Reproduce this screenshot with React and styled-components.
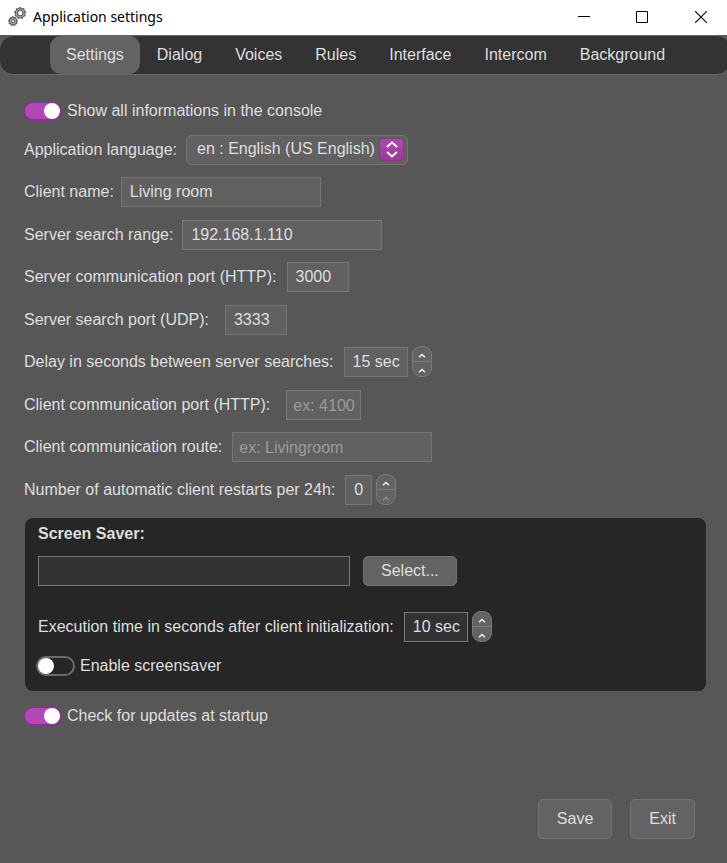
import React, { useState } from "react";
import styled, { createGlobalStyle, css } from "styled-components";

const GlobalStyle = createGlobalStyle`
  *, *::before, *::after { box-sizing: border-box; }
  body {
    margin: 0;
    background: #575757;
    color: #dfdfdf;
    font: 16px/20px "Liberation Sans", Arial, sans-serif;
  }
  button, input, select { font: inherit; color: inherit; margin: 0; }
`;

const Window = styled.div`
  min-height: 100vh;
  display: flex;
  flex-direction: column;
  overflow-x: hidden;
`;

const TitleBar = styled.header`
  height: 35px;
  display: flex;
  align-items: center;
  padding: 0 0 2px 8px;
  background: #fff;
  color: #000;
`;

const Title = styled.h1`
  margin: 0 auto 0 6px;
  font: 14px/20px "Noto Sans", sans-serif;
`;

const WindowButton = styled.button`
  width: 58px;
  height: 32px;
  display: grid;
  place-items: center;
  padding: 0;
  border: 0;
  background: transparent;
  &:last-child { width: 56px; padding-left: 4px; }
`;

const TabBar = styled.nav`
  display: flex;
  gap: 1px;
  height: 40px;
  margin: 0 -4px 0 -1px;
  padding-left: 50px;
  border: 1px solid #686868;
  border-radius: 14px;
  background: #333;
`;

const Tab = styled.button`
  padding: 0 16px;
  border: 0;
  border-radius: 11px;
  background: ${(p) => (p.$active ? "#636363" : "transparent")};
`;

const Content = styled.main`
  flex: 1;
  display: flex;
  flex-direction: column;
  padding: 26px 21px 24px 24px;
`;

const ToggleLabel = styled.label`
  display: flex;
  align-items: center;
  gap: 5px;
  height: 20px;
  margin-left: -1px;
`;

const Switch = styled.input`
  appearance: none;
  display: flex;
  align-items: center;
  width: 39px;
  height: 20px;
  border-radius: 10px;
  border: 2px solid #6c6c6c;
  background: #262626;
  &::before {
    content: "";
    width: 16px;
    height: 16px;
    border-radius: 50%;
    background: #fff;
  }
  &:checked {
    justify-content: flex-end;
    border-color: #87358a;
    background: #b148b3;
  }
`;

const Rows = styled.div`
  display: flex;
  flex-direction: column;
  margin-top: 14px;
`;

const Row = styled.div`
  display: flex;
  align-items: center;
  height: 30px;
  & + & { margin-top: 12px; }
  & + &:nth-child(odd) { margin-top: 13px; }
`;

const labelGaps = { small: 7, medium: 9, normal: 10, wide: 16 };

const Label = styled.label`
  margin-right: ${(p) => labelGaps[p.$gap || "normal"]}px;
  white-space: nowrap;
`;

const fieldWidths = { count: 27, port: 62, seconds: 64, example: 75, text: 200, file: 312 };

const Field = styled.input`
  width: ${(p) => fieldWidths[p.$size]}px;
  height: 30px;
  padding: 0 2px 0 8px;
  border: 1px solid ${(p) => (p.$dark ? "#797979" : "#757575")};
  border-radius: 0;
  background: ${(p) => (p.$dark ? "#323232" : "#616161")};
  outline: 0;
  ${(p) => p.$hint && css`padding: 1px 2px 0 6px;`}
  &::placeholder { color: #9b9b9b; opacity: 1; }
`;

const SelectBox = styled.div`
  position: relative;
  display: flex;
`;

const Select = styled.select`
  appearance: none;
  height: 30px;
  width: 222px;
  padding: 0 30px 2px 10px;
  border: 1px solid #727272;
  border-radius: 5px;
  background: #616161;
`;

const SelectArrow = styled.span`
  position: absolute;
  top: 3px;
  right: 4px;
  width: 25px;
  height: 23px;
  display: grid;
  place-items: center;
  border: 1px solid #87358a;
  border-radius: 4px;
  background: linear-gradient(#af49b1, #963d99);
  pointer-events: none;
`;

const Stepper = styled.div`
  display: flex;
  flex-direction: column;
  width: 20px;
  height: 31px;
  margin: 0 0 2px 4px;
  border: 1px solid #7b7b7b;
  border-radius: 9px;
  background: #636363;
  overflow: hidden;
`;

const StepButton = styled.button`
  flex: 1;
  display: grid;
  place-items: center;
  padding: 3px 0 0;
  border: 0;
  background: transparent;
  color: #f2f2f2;
  & + & { border-top: 1px solid #7b7b7b; }
  &:disabled { color: #8c8c8c; }
`;

const Panel = styled.section`
  display: flex;
  flex-direction: column;
  margin: 13px 0 15px 1px;
  padding: 6px 13px 15px;
  border-radius: 8px;
  background: #262626;
`;

const PanelTitle = styled.h2`
  margin: 0;
  font-size: 16px;
  line-height: 20px;
`;

const PanelRow = styled.div`
  display: flex;
  align-items: center;
  height: 30px;
  margin-top: ${(p) => (p.$spaced ? 26 : 12)}px;
`;

const PanelToggle = styled.div`
  margin: 14px 0 0 -1px;
`;

const Button = styled.button`
  height: ${(p) => (p.$large ? 40 : 30)}px;
  padding: 0 ${(p) => (p.$large ? 18 : 17)}px;
  border: 1px solid #737373;
  border-radius: 5px;
  background: #636363;
`;

const SelectFile = styled(Button)`
  margin-left: 13px;
`;

const Footer = styled.footer`
  display: flex;
  justify-content: flex-end;
  gap: 18px;
  margin-top: auto;
  padding-right: 11px;
`;

function Gear({ x, y, r }) {
  const teeth = Array.from({ length: 9 }, (_, i) => i * 40);
  return (
    <g transform={`translate(${x} ${y})`}>
      {teeth.map((angle) => (
        <path key={angle} d={`M0 ${-r}V${-r - 2.3}`} transform={`rotate(${angle})`} stroke="#777" strokeWidth="1.8" />
      ))}
      <circle r={r} fill="none" stroke="#5a5a5a" strokeWidth="3.2" />
      <circle r={r} fill="none" stroke="#a8a8a8" strokeWidth="1.3" />
    </g>
  );
}

function GearsIcon() {
  return (
    <svg width="19" height="21" viewBox="0 0 19 21" aria-hidden="true">
      <Gear x={12.2} y={7} r={3.8} />
      <Gear x={5} y={15.2} r={2.6} />
    </svg>
  );
}

function Chevron() {
  return (
    <svg width="8" height="5" viewBox="0 0 8 5" aria-hidden="true">
      <path d="M1 4.2L4 1.5L7 4.2" fill="none" stroke="currentColor" strokeWidth="1.5" />
    </svg>
  );
}

function Toggle({ label, on }) {
  return (
    <ToggleLabel>
      <Switch type="checkbox" role="switch" defaultChecked={on} />
      {label}
    </ToggleLabel>
  );
}

function NumberField({ id, start, unit = "", size, dark }) {
  const [value, setValue] = useState(start);
  return (
    <>
      <Field id={id} $size={size} $dark={dark} value={`${value}${unit}`} readOnly />
      <Stepper>
        <StepButton type="button" aria-label="Increase" onClick={() => setValue(value + 1)}>
          <Chevron />
        </StepButton>
        <StepButton type="button" aria-label="Decrease" disabled={value === 0} onClick={() => setValue(value - 1)}>
          <Chevron />
        </StepButton>
      </Stepper>
    </>
  );
}

function TextRow({ id, label, gap, size, ...input }) {
  return (
    <Row>
      <Label htmlFor={id} $gap={gap}>{label}</Label>
      <Field id={id} $size={size} $hint={Boolean(input.placeholder)} {...input} />
    </Row>
  );
}

const tabs = ["Settings", "Dialog", "Voices", "Rules", "Interface", "Intercom", "Background"];

export default function App() {
  const [active, setActive] = useState("Settings");
  return (
    <Window>
      <GlobalStyle />
      <TitleBar>
        <GearsIcon />
        <Title>Application settings</Title>
        <WindowButton aria-label="Minimize">
          <svg width="12" height="12"><path d="M0 5.5H12" stroke="#000" /></svg>
        </WindowButton>
        <WindowButton aria-label="Maximize">
          <svg width="12" height="12"><path d="M.5 .5H11.5V11.5H.5Z" fill="none" stroke="#000" /></svg>
        </WindowButton>
        <WindowButton aria-label="Close">
          <svg width="12" height="12"><path d="M0 0L12 12M12 0L0 12" stroke="#000" strokeWidth="1.1" /></svg>
        </WindowButton>
      </TitleBar>
      <TabBar>
        {tabs.map((tab) => (
          <Tab key={tab} $active={tab === active} onClick={() => setActive(tab)}>{tab}</Tab>
        ))}
      </TabBar>
      <Content>
        <Toggle label="Show all informations in the console" on />
        <Rows>
          <Row>
            <Label htmlFor="language" $gap="medium">Application language:</Label>
            <SelectBox>
              <Select id="language">
                <option>en : English (US English)</option>
              </Select>
              <SelectArrow>
                <svg width="12" height="17" viewBox="0 0 12 17" aria-hidden="true">
                  <path d="M1 6L6 1.5L11 6M1 11L6 15.5L11 11" fill="none" stroke="#fff" strokeWidth="1.7" />
                </svg>
              </SelectArrow>
            </SelectBox>
          </Row>
          <TextRow id="name" label="Client name:" gap="small" size="text" defaultValue="Living room" />
          <TextRow id="range" label="Server search range:" gap="medium" size="text" defaultValue="192.168.1.110" />
          <TextRow id="http" label="Server communication port (HTTP):" size="port" defaultValue="3000" />
          <TextRow id="udp" label="Server search port (UDP):" gap="wide" size="port" defaultValue="3333" />
          <Row>
            <Label htmlFor="delay">Delay in seconds between server searches:</Label>
            <NumberField id="delay" start={15} unit=" sec" size="seconds" />
          </Row>
          <TextRow id="client-http" label="Client communication port (HTTP):" gap="wide" size="example" placeholder="ex: 4100" />
          <TextRow id="route" label="Client communication route:" size="text" placeholder="ex: Livingroom" />
          <Row>
            <Label htmlFor="restarts">Number of automatic client restarts per 24h:</Label>
            <NumberField id="restarts" start={0} size="count" />
          </Row>
        </Rows>
        <Panel>
          <PanelTitle>Screen Saver:</PanelTitle>
          <PanelRow>
            <Field $size="file" $dark aria-label="Screen saver file" />
            <SelectFile type="button">Select...</SelectFile>
          </PanelRow>
          <PanelRow $spaced>
            <Label htmlFor="execution">Execution time in seconds after client initialization:</Label>
            <NumberField id="execution" start={10} unit=" sec" size="seconds" dark />
          </PanelRow>
          <PanelToggle>
            <Toggle label="Enable screensaver" />
          </PanelToggle>
        </Panel>
        <Toggle label="Check for updates at startup" on />
        <Footer>
          <Button $large type="button">Save</Button>
          <Button $large type="button">Exit</Button>
        </Footer>
      </Content>
    </Window>
  );
}
